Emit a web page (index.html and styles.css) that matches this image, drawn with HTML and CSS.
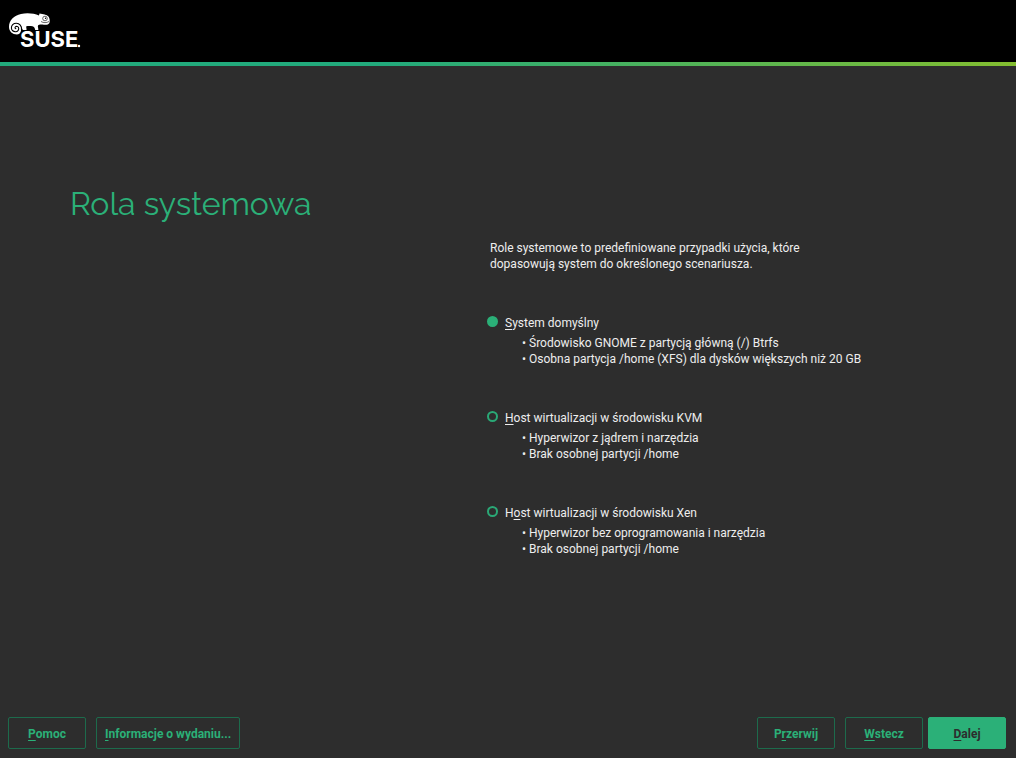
FILE: index.html
```html
<!DOCTYPE html>
<html lang="pl">
<head>
<meta charset="utf-8">
<meta name="viewport" content="width=device-width, initial-scale=1">
<title>Rola systemowa</title>
<link rel="stylesheet" href="styles.css">
</head>
<body>
<header class="banner">
  <svg class="logo" width="88" height="62" viewBox="0 0 88 62" role="img" aria-label="SUSE">
    <path fill="#fff" d="M17 34.500C12.500 34.500 9 31.500 9 27C9 20 14 15.500 21 14C27 12.500 34 13.300 39 15.500L39.500 13.400C43 14 47 14.500 48.500 16.500C49.800 18.500 50 21 49.400 23C48.500 25 45.500 25 42.500 24.600C40.500 24.400 38.800 24.500 38 25.500C37.500 27 38.500 28 38.300 30L35.200 30C35 28 34 26.500 32.500 26.200C30.500 25.800 28 25.800 26.300 26.200C26 27.500 26.800 28.700 26.500 30L23 30C22 29 22 27.500 21.300 26C21.800 31 20 34.500 17 34.500Z"/>
    <path fill="none" stroke="#000" stroke-width="1.100" stroke-linecap="round" d="M21.500 30C22 26 19.500 23.300 16.300 23.300C13.300 23.300 11.300 25.300 11.400 27.900C11.500 30.300 13.300 31.800 15.600 31.700C17.700 31.500 18.900 30 18.700 28.300C18.500 26.800 17.100 26 15.900 26.500C14.800 27 14.700 28.500 15.900 28.700"/>
    <circle cx="45" cy="18.500" r="2.300" fill="#fff" stroke="#000" stroke-width=".6"/>
    <circle cx="45.600" cy="18.300" r=".7"/>
    <path fill="none" stroke="#000" stroke-width=".6" d="M41 21.500C43.500 23 46.500 23 49 21.500"/>
    <text class="logo-text" x="20" y="47">SUSE</text>
    <circle cx="79" cy="46" r="1.200" fill="#fff"/>
  </svg>
</header>
<form class="page">
  <main class="content">
    <h1 class="title">Rola systemowa</h1>
    <div class="roles">
      <p class="intro">Role systemowe to predefiniowane przypadki użycia, które dopasowują system do określonego scenariusza.</p>
      <section class="role">
        <input class="radio" type="radio" name="role" id="role-default" checked>
        <label class="name" for="role-default"><u>S</u>ystem domyślny</label>
        <ul class="details">
          <li>• Środowisko GNOME z partycją główną (/) Btrfs</li>
          <li>• Osobna partycja /home (XFS) dla dysków większych niż 20 GB</li>
        </ul>
      </section>
      <section class="role">
        <input class="radio" type="radio" name="role" id="role-kvm">
        <label class="name" for="role-kvm"><u>H</u>ost wirtualizacji w środowisku KVM</label>
        <ul class="details">
          <li>• Hyperwizor z jądrem i narzędzia</li>
          <li>• Brak osobnej partycji /home</li>
        </ul>
      </section>
      <section class="role">
        <input class="radio" type="radio" name="role" id="role-xen">
        <label class="name" for="role-xen">H<u>o</u>st wirtualizacji w środowisku Xen</label>
        <ul class="details">
          <li>• Hyperwizor bez oprogramowania i narzędzia</li>
          <li>• Brak osobnej partycji /home</li>
        </ul>
      </section>
    </div>
  </main>
  <footer class="actions">
    <div class="group">
      <button class="button" type="button"><u>P</u>omoc</button>
      <button class="button" type="button"><u>I</u>nformacje o wydaniu...</button>
    </div>
    <div class="group">
      <button class="button" type="button">P<u>r</u>zerwij</button>
      <div class="group steps">
        <button class="button" type="button"><u>W</u>stecz</button>
        <button class="button primary" type="submit"><u>D</u>alej</button>
      </div>
    </div>
  </footer>
</form>
</body>
</html>
```
FILE: styles.css
```css
* {
  box-sizing: border-box;
}

body {
  display: flex;
  flex-direction: column;
  min-height: 100vh;
  margin: 0;
  background: #2d2d2d;
  color: #eee;
  font: 12px/16px Roboto, sans-serif;
}

u {
  text-decoration: underline 1px;
  text-underline-offset: 2px;
  text-decoration-skip-ink: none;
}

.banner {
  padding-bottom: 4px;
  background: linear-gradient(90deg, #22aa7c 0%, #22aa7c 38%, #84be30 100%) bottom / 100% 4px no-repeat #000;
}

.logo {
  display: block;
}

.logo-text {
  fill: #fff;
  font: 700 22px Inter, sans-serif;
}

.page {
  display: flex;
  flex: 1;
  flex-direction: column;
  justify-content: space-between;
}

.content {
  display: grid;
  grid-template-columns: 420fr 456fr;
  padding: 118px 70px 40px;
}

.title {
  margin: 0;
  color: #2bb078;
  font: 400 32px/40px Raleway, Lato, sans-serif;
}

.roles {
  display: grid;
  gap: 43px;
  padding-top: 56px;
}

.intro {
  max-width: 330px;
  margin: 0;
}

.role {
  display: grid;
  grid-template-columns: 11px 1fr;
  gap: 4px 7px;
  margin-left: -3px;
}

.radio {
  width: 11px;
  height: 11px;
  margin: 1px 0 0;
  border: 2px solid #2aa876;
  border-radius: 50%;
  appearance: none;
}

.radio:checked {
  background: #2bb078;
  border-color: #2bb078;
}

.name {
  justify-self: start;
}

.details {
  grid-column: 2;
  margin: 0;
  padding: 0 0 0 17px;
  list-style: none;
}

.actions {
  display: flex;
  justify-content: space-between;
  padding: 0 10px 9px 8px;
}

.group {
  display: flex;
  gap: 10px;
}

.steps {
  gap: 5px;
}

.button {
  min-width: 78px;
  height: 32px;
  padding: 2px 8px 0;
  border: 1px solid #1d6b4c;
  border-radius: 2px;
  background: transparent;
  color: #2bb078;
  font: 700 12px/16px Roboto, sans-serif;
}

.primary {
  border-color: #2bb078;
  background: #2bb078;
  color: #2d2d2d;
}
```
